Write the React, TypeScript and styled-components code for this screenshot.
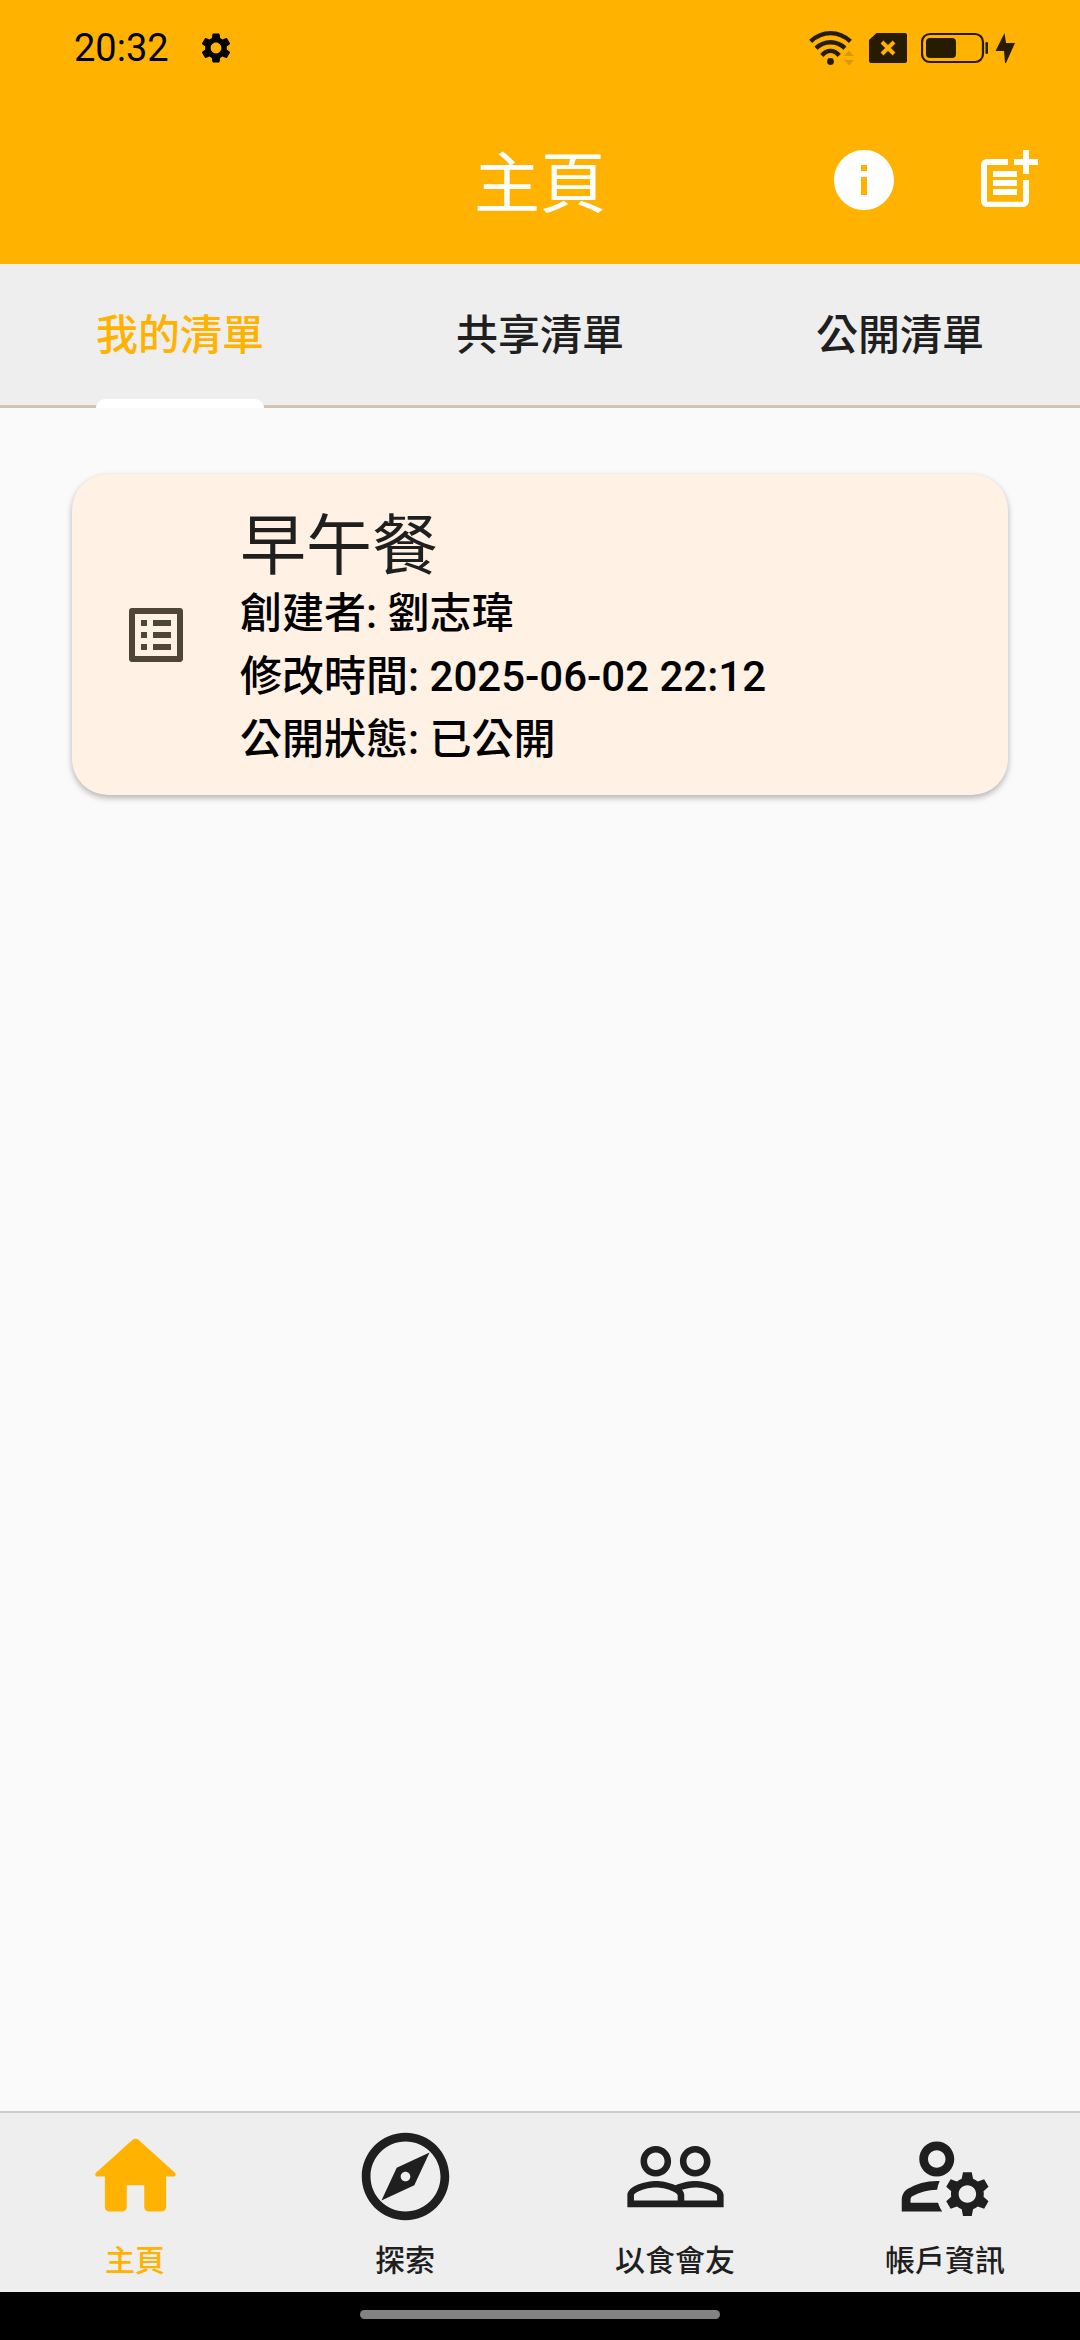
import React, { useState } from "react";
import styled, { createGlobalStyle } from "styled-components";
import {
  MdInfo,
  MdListAlt,
  MdOutlineExplore,
  MdOutlineManageAccounts,
  MdPeopleOutline,
  MdPostAdd,
  MdSettings,
} from "react-icons/md";

const color = {
  brand: "#ffb300",
  bar: "#eeeeee",
  page: "#fafafa",
  card: "#fff1e3",
  ink: "#1f1f1f",
  icon: "#4f4539",
  divider: "#d2c4b4",
  status: "#281c00",
};

const GlobalStyle = createGlobalStyle`
  *, *::before, *::after { box-sizing: border-box; }
  body {
    margin: 0;
    background: ${color.page};
    color: ${color.ink};
    font-family: Roboto, "Noto Sans CJK TC", sans-serif;
  }
  button { font: inherit; color: inherit; background: none; border: 0; padding: 0; cursor: pointer; }
  a { color: inherit; text-decoration: none; }
  svg { display: block; flex: none; }
  h1, h2, p { margin: 0; }
`;

const Screen = styled.div`
  display: flex;
  flex-direction: column;
  min-height: 100vh;
`;

const Header = styled.header`
  background: ${color.brand};
`;

const StatusBar = styled.div`
  display: flex;
  justify-content: space-between;
  align-items: center;
  height: 96px;
  padding: 0 64px 0 74px;
`;

const StatusGroup = styled.div<{ $gap: number; $tint: string }>`
  display: flex;
  align-items: center;
  gap: ${(p) => p.$gap}px;
  color: ${(p) => p.$tint};
`;

const Clock = styled.time`
  font-size: 38px;
  line-height: 48px;
`;

const AppBar = styled.div`
  display: grid;
  grid-template-columns: 1fr auto 1fr;
  align-items: center;
  height: 168px;
  padding: 0 36px;
  color: #ffffff;
`;

const Title = styled.h1`
  grid-column: 2;
  padding-top: 10px;
  font-size: 66px;
  line-height: 84px;
  font-weight: 400;
`;

const Actions = styled.div`
  display: flex;
  justify-content: flex-end;
  gap: 72px;
`;

const TabBar = styled.div`
  display: flex;
  height: 144px;
  background: ${color.bar};
  box-shadow: inset 0 -3px ${color.divider};
`;

const Tab = styled.button<{ $active: boolean }>`
  flex: 1;
  display: flex;
  justify-content: center;
  font-size: 42px;
  line-height: 60px;
  font-weight: 500;
  color: ${(p) => (p.$active ? color.brand : color.ink)};
`;

const TabLabel = styled.span<{ $active: boolean }>`
  display: flex;
  flex-direction: column;
  justify-content: space-between;
  height: 100%;
  padding-top: 42px;

  &::after {
    content: "";
    height: 9px;
    border-radius: 9px 9px 0 0;
    background: ${(p) => (p.$active ? "#ffffff" : "transparent")};
  }
`;

const Content = styled.main`
  flex: 1;
  padding: 66px 72px;
`;

const Card = styled.a`
  display: flex;
  align-items: center;
  gap: 48px;
  padding: 0 48px;
  border-radius: 36px;
  background: ${color.card};
  box-shadow: 0 3px 6px rgba(0, 0, 0, 0.26), 0 2px 6px rgba(0, 0, 0, 0.04);
`;

const CardIcon = styled.span`
  color: ${color.icon};
`;

const CardText = styled.div`
  padding: 38px 0 24px;
`;

const CardTitle = styled.h2`
  font-size: 66px;
  line-height: 70px;
  font-weight: 400;
`;

const CardLine = styled.p`
  font-size: 42px;
  line-height: 63px;
  font-weight: 500;
  color: #000000;
`;

const NavBar = styled.nav`
  display: flex;
  border-top: 2px solid #cccccc;
  background: ${color.bar};
`;

const NavItem = styled.a<{ $active: boolean }>`
  flex: 1;
  display: flex;
  flex-direction: column;
  align-items: center;
  gap: 12px;
  padding: 11px 0;
  font-size: 30px;
  line-height: 40px;
  font-weight: 500;
  color: ${(p) => (p.$active ? color.brand : color.ink)};
`;

const GestureArea = styled.div`
  display: flex;
  justify-content: center;
  align-items: center;
  height: 48px;
  padding-bottom: 3px;
  background: #000000;
`;

const GestureHandle = styled.span`
  width: 33.3333%;
  height: 9px;
  border-radius: 5px;
  background: #828282;
`;

const WifiIcon = () => (
  <svg width="46" height="36" viewBox="0 0 46 36" aria-hidden="true">
    <g fill="none" stroke="currentColor" strokeWidth="4.4">
      <path d="M1.6 11.4C13.5 0.4 29.5 0.4 41.4 11.4" />
      <path d="M7 18.2C15.5 10.2 27.5 10.2 36 18.2" />
      <path d="M12.8 25.5C18 19.3 25 19.3 30.2 25.5" />
    </g>
    <circle cx="21.5" cy="31.5" r="3.4" fill="currentColor" />
    <path d="M35 26l5-5.500 5 5.500zM35 30h10l-5 5.500z" fill="#d79a08" />
  </svg>
);

const SimIcon = () => (
  <svg width="38" height="30" viewBox="0 0 38 30" aria-hidden="true">
    <path
      d="M7.500 0H36a2 2 0 0 1 2 2V28a2 2 0 0 1-2 2H2a2 2 0 0 1-2-2V7z"
      fill="currentColor"
    />
    <path d="M13 9l12 12M25 9L13 21" stroke={color.brand} strokeWidth="4" />
  </svg>
);

const BatteryIcon = () => (
  <svg width="95" height="32" viewBox="0 0 95 32" aria-hidden="true">
    <rect x="1" y="2" width="61" height="28" rx="8" fill="none" stroke="currentColor" strokeWidth="2.2" />
    <rect x="5" y="6" width="30" height="20" rx="4" fill="currentColor" />
    <rect x="64.5" y="10" width="2.5" height="12" rx="1.2" fill="currentColor" />
    <path d="M83.500 1L74.500 19h8.500l1 12h1l9-20h-9z" fill="currentColor" />
  </svg>
);

const HomeIcon = ({ size }: { size: number }) => (
  <svg width={size} height={size} viewBox="0 0 24 24" fill="currentColor" aria-hidden="true">
    <path d="M10 19v-5h4v5c0 .55.45 1 1 1h3c.55 0 1-.45 1-1v-7h1.7c.46 0 .68-.57.33-.87L12.67 3.6c-.38-.34-.96-.34-1.34 0l-8.36 7.53c-.34.3-.13.87.33.87H5v7c0 .55.45 1 1 1h3c.55 0 1-.45 1-1z" />
  </svg>
);

const tabs = ["我的清單", "共享清單", "公開清單"];

const navItems = [
  { label: "主頁", href: "#home", Icon: HomeIcon },
  { label: "探索", href: "#explore", Icon: MdOutlineExplore },
  { label: "以食會友", href: "#friends", Icon: MdPeopleOutline },
  { label: "帳戶資訊", href: "#account", Icon: MdOutlineManageAccounts },
];

const lists = [
  { name: "早午餐", author: "劉志瑋", modified: "2025-06-02 22:12", status: "已公開" },
];

export default function App() {
  const [activeTab, setActiveTab] = useState(0);

  return (
    <>
      <GlobalStyle />
      <Screen lang="zh-Hant">
        <Header>
          <StatusBar>
            <StatusGroup $gap={29} $tint="#000000">
              <Clock>20:32</Clock>
              <MdSettings size={36} />
            </StatusGroup>
            <StatusGroup $gap={14} $tint={color.status}>
              <WifiIcon />
              <SimIcon />
              <BatteryIcon />
            </StatusGroup>
          </StatusBar>
          <AppBar>
            <Title>主頁</Title>
            <Actions>
              <button type="button" aria-label="說明">
                <MdInfo size={72} />
              </button>
              <button type="button" aria-label="新增清單">
                <MdPostAdd size={72} />
              </button>
            </Actions>
          </AppBar>
        </Header>

        <TabBar role="tablist">
          {tabs.map((label, i) => (
            <Tab
              key={label}
              type="button"
              role="tab"
              aria-selected={i === activeTab}
              $active={i === activeTab}
              onClick={() => setActiveTab(i)}
            >
              <TabLabel $active={i === activeTab}>{label}</TabLabel>
            </Tab>
          ))}
        </TabBar>

        <Content>
          {lists.map((list) => (
            <Card key={list.name} href="#list">
              <CardIcon>
                <MdListAlt size={72} />
              </CardIcon>
              <CardText>
                <CardTitle>{list.name}</CardTitle>
                <CardLine>創建者: {list.author}</CardLine>
                <CardLine>修改時間: {list.modified}</CardLine>
                <CardLine>公開狀態: {list.status}</CardLine>
              </CardText>
            </Card>
          ))}
        </Content>

        <NavBar>
          {navItems.map(({ label, href, Icon }, i) => (
            <NavItem key={label} href={href} $active={i === 0}>
              <Icon size={105} />
              {label}
            </NavItem>
          ))}
        </NavBar>
        <GestureArea>
          <GestureHandle />
        </GestureArea>
      </Screen>
    </>
  );
}
